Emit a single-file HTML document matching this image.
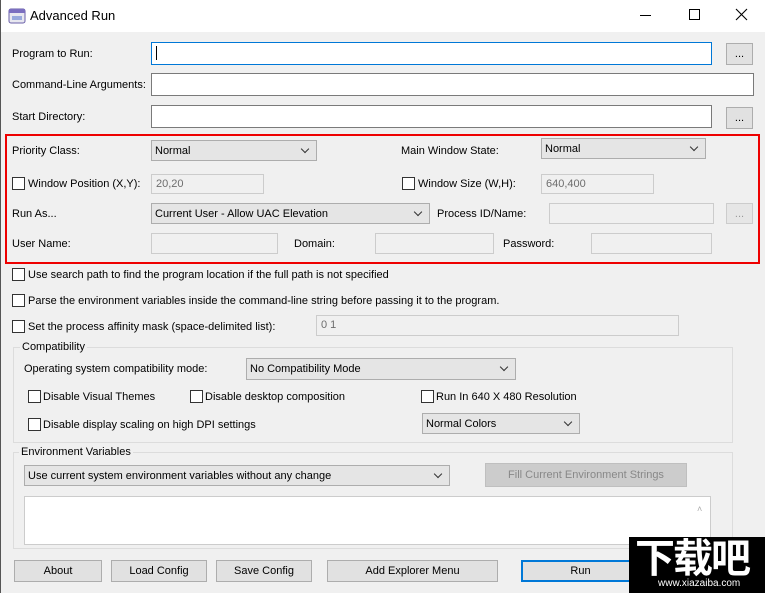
<!DOCTYPE html>
<html><head><meta charset="utf-8"><style>
*{box-sizing:border-box;margin:0;padding:0}
body{width:765px;height:593px;background:#f0f0f0;font-family:"Liberation Sans",sans-serif;font-size:11px;color:#000;position:relative;overflow:hidden}
.a{position:absolute;white-space:nowrap}
.t{position:absolute;white-space:nowrap;line-height:14px}
.in{position:absolute;background:#fff;border:1px solid #7a7a7a}
.dis{position:absolute;background:#f0f0f0;border:1px solid #ccc;color:#6d6d6d;padding:3px 0 0 4px}
.sel{position:absolute;background:#e5e5e5;border:1px solid #adadad;padding:4px 0 0 3px}
.sel:after{content:"";position:absolute;right:8px;top:5px;width:5px;height:5px;border-right:1px solid #333;border-bottom:1px solid #333;transform:rotate(45deg)}
.btn{position:absolute;background:#e1e1e1;border:1px solid #adadad;text-align:center;line-height:21px}
.cb{position:absolute;width:13px;height:13px;border:1px solid #333;background:#fff}
.grp{position:absolute;border:1px solid #dcdcdc}
.gl{position:absolute;background:#f0f0f0;padding:0 2px;line-height:13px}
</style></head><body>
<div class="a" style="left:0;top:0;width:1px;height:593px;background:#555"></div>
<div class="a" style="left:1px;top:0;width:764px;height:32px;background:#fff"></div>
<svg class="a" style="left:8px;top:8px" width="18" height="16"><rect x="1" y="1" width="16" height="14" rx="2" fill="#e8e8f0" stroke="#6a5fa8"/><rect x="1" y="1" width="16" height="4" fill="#7b6fc0"/><rect x="4" y="8" width="10" height="4" fill="#9ad" /></svg>
<div class="t" style="left:30px;top:9px;font-size:13px">Advanced Run</div>
<div class="a" style="left:640px;top:15px;width:11px;height:1px;background:#000"></div>
<div class="a" style="left:689px;top:9px;width:11px;height:11px;border:1px solid #000"></div>
<svg class="a" style="left:735px;top:8px" width="13" height="13"><path d="M1 1L12 12M12 1L1 12" stroke="#000" stroke-width="1.1"/></svg>

<div class="t" style="left:12px;top:47px">Program to Run:</div>
<div class="in" style="left:151px;top:42px;width:561px;height:23px;border-color:#0078d7"></div>
<div class="a" style="left:156px;top:46px;width:1px;height:14px;background:#000"></div>
<div class="btn" style="left:726px;top:43px;width:27px;height:22px">...</div>
<div class="t" style="left:12px;top:78px">Command-Line Arguments:</div>
<div class="in" style="left:151px;top:73px;width:603px;height:23px"></div>
<div class="t" style="left:12px;top:110px">Start Directory:</div>
<div class="in" style="left:151px;top:105px;width:561px;height:23px"></div>
<div class="btn" style="left:726px;top:107px;width:27px;height:22px">...</div>

<div class="a" style="left:5px;top:134px;width:755px;height:130px;border:2px solid #e00"></div>
<div class="t" style="left:12px;top:144px">Priority Class:</div>
<div class="sel" style="left:151px;top:140px;width:166px;height:21px">Normal</div>
<div class="t" style="left:401px;top:144px">Main Window State:</div>
<div class="sel" style="left:541px;top:138px;width:165px;height:21px">Normal</div>
<div class="cb" style="left:12px;top:177px"></div>
<div class="t" style="left:28px;top:177px">Window Position (X,Y):</div>
<div class="dis" style="left:151px;top:174px;width:113px;height:20px">20,20</div>
<div class="cb" style="left:402px;top:177px"></div>
<div class="t" style="left:418px;top:177px">Window Size (W,H):</div>
<div class="dis" style="left:541px;top:174px;width:113px;height:20px">640,400</div>
<div class="t" style="left:12px;top:207px">Run As...</div>
<div class="sel" style="left:151px;top:203px;width:279px;height:21px">Current User - Allow UAC Elevation</div>
<div class="t" style="left:437px;top:207px">Process ID/Name:</div>
<div class="dis" style="left:549px;top:203px;width:165px;height:21px"></div>
<div class="btn" style="left:726px;top:203px;width:27px;height:21px;color:#999;border-color:#ccc;background:#e6e6e6">...</div>
<div class="t" style="left:12px;top:237px">User Name:</div>
<div class="dis" style="left:151px;top:233px;width:127px;height:21px"></div>
<div class="t" style="left:294px;top:237px">Domain:</div>
<div class="dis" style="left:375px;top:233px;width:119px;height:21px"></div>
<div class="t" style="left:503px;top:237px">Password:</div>
<div class="dis" style="left:591px;top:233px;width:121px;height:21px"></div>

<div class="cb" style="left:12px;top:268px"></div>
<div class="t" style="left:28px;top:268px">Use search path to find the program location if the full path is not specified</div>
<div class="cb" style="left:12px;top:294px"></div>
<div class="t" style="left:28px;top:294px">Parse the environment variables inside the command-line string before passing it to the program.</div>
<div class="cb" style="left:12px;top:320px"></div>
<div class="t" style="left:28px;top:320px">Set the process affinity mask (space-delimited list):</div>
<div class="dis" style="left:316px;top:315px;width:363px;height:21px">0 1</div>

<div class="grp" style="left:13px;top:347px;width:720px;height:96px"></div>
<div class="gl" style="left:20px;top:341px">Compatibility</div>
<div class="t" style="left:24px;top:362px">Operating system compatibility mode:</div>
<div class="sel" style="left:246px;top:358px;width:270px;height:22px">No Compatibility Mode</div>
<div class="cb" style="left:28px;top:390px"></div>
<div class="t" style="left:43px;top:390px">Disable Visual Themes</div>
<div class="cb" style="left:190px;top:390px"></div>
<div class="t" style="left:205px;top:390px">Disable desktop composition</div>
<div class="cb" style="left:421px;top:390px"></div>
<div class="t" style="left:436px;top:390px">Run In 640 X 480 Resolution</div>
<div class="cb" style="left:28px;top:418px"></div>
<div class="t" style="left:43px;top:418px">Disable display scaling on high DPI settings</div>
<div class="sel" style="left:422px;top:413px;width:158px;height:21px">Normal Colors</div>

<div class="grp" style="left:13px;top:452px;width:720px;height:97px"></div>
<div class="gl" style="left:19px;top:446px">Environment Variables</div>
<div class="sel" style="left:24px;top:465px;width:426px;height:21px">Use current system environment variables without any change</div>
<div class="btn" style="left:485px;top:463px;width:202px;height:24px;color:#888;background:#cccccc;border-color:#bfbfbf;line-height:22px">Fill Current Environment Strings</div>
<div class="in" style="left:24px;top:496px;width:687px;height:49px;border-color:#ccc"></div>
<div class="t" style="left:697px;top:502px;color:#aaa;font-size:9px">˄</div>

<div class="btn" style="left:14px;top:560px;width:88px;height:22px">About</div>
<div class="btn" style="left:111px;top:560px;width:96px;height:22px">Load Config</div>
<div class="btn" style="left:216px;top:560px;width:96px;height:22px">Save Config</div>
<div class="btn" style="left:327px;top:560px;width:171px;height:22px">Add Explorer Menu</div>
<div class="btn" style="left:521px;top:560px;width:119px;height:22px;border:2px solid #0078d7;line-height:19px">Run</div>

<div class="a" style="left:629px;top:537px;width:136px;height:56px;background:#000"></div>
<div class="t" style="left:635px;top:533px;color:#fff;font-family:'Noto Sans CJK SC',sans-serif;font-size:40px;font-weight:bold;line-height:44px;letter-spacing:-2px">下载吧</div>
<div class="t" style="left:658px;top:578px;color:#fff;font-size:10px;line-height:12px">www.xiazaiba.com</div>
</body></html>
